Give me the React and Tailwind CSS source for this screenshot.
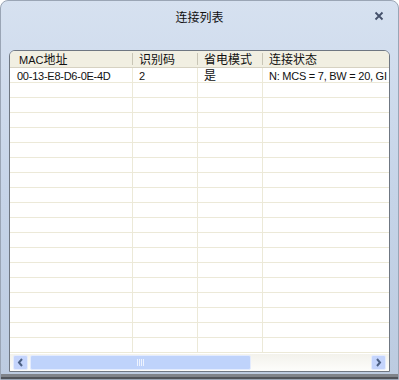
import React from "react";

const cols = [
  { w: "w-[123px]", label: (<><span className="text-[11px]">MAC</span><span className="text-[12px]">地址</span></>) },
  { w: "w-[65px]", label: "识别码" },
  { w: "w-[65px]", label: "省电模式" },
  { w: "flex-1", label: "连接状态" },
];

const data = [["00-13-E8-D6-0E-4D", "2", "是", "N: MCS = 7, BW = 20, GI = 800"]];

export default function App() {
  const rows = Array.from({ length: 19 }, (_, i) => data[i] || ["", "", "", ""]);
  return (
    <div className="w-[399px] h-[380px] bg-[#ffffff] overflow-hidden" style={{ fontFamily: '"Liberation Sans", "Noto Sans CJK SC", sans-serif' }}>
      <div className="w-[399px] h-[380px] rounded-t-[8px] border border-[#9aa5b5] bg-gradient-to-b from-[#d6e1f0] via-[#c6d4e8] to-[#bccbe0] flex flex-col shadow-[inset_0_-2px_0_#50545a,inset_0_-5px_0_#80848a]">
        {/* title */}
        <div className="h-[32px] relative flex items-center justify-center text-[12px] text-[#111]">
          <span className="mt-[1px]">连接列表</span>
          <span className="absolute right-[14px] top-[10px]">
            <svg width="10" height="10" viewBox="0 0 10 10">
              <path d="M1.5 1.5 L8.5 8.5 M8.5 1.5 L1.5 8.5" stroke="#44506a" strokeWidth="1.8" />
            </svg>
          </span>
        </div>
        <div className="h-[17px]" />
        {/* list */}
        <div className="mx-[8px] flex-1 mb-[7px] rounded-t-[6px] border border-[#6f7782] bg-white flex flex-col overflow-hidden">
          <div className="h-[17px] flex bg-[#f1efe2] border-b border-[#d6d2c2] text-[12px] text-[#111]">
            {cols.map((c, i) => (
              <div key={i} className={`${c.w} flex items-center relative`}>
                <span className={i === 0 ? "pl-[9px] pt-[1px]" : "pl-[6px] pt-[1px]"}>{c.label}</span>
                {i < 3 && <span className="absolute right-0 top-[2px] bottom-[2px] w-px bg-[#c9c6b6]" />}
              </div>
            ))}
          </div>
          <div className="flex-1 overflow-hidden">
            {rows.map((r, ri) => (
              <div key={ri} className="h-[15px] flex border-b border-[#ece9d8] text-[11px] text-[#111] tracking-[-0.25px]">
                {cols.map((c, i) => (
                  <div key={i} className={`${c.w} flex items-center pt-[2px] overflow-hidden whitespace-nowrap ${i < 3 ? "border-r border-[#ece9d8]" : ""}`}>
                    <span className={`${i === 0 ? "pl-[7px]" : "pl-[6px]"} ${i === 2 ? "text-[12px]" : ""}`}>{r[i]}</span>
                  </div>
                ))}
              </div>
            ))}
          </div>
          {/* scrollbar */}
          <div className="h-[17px] flex items-center bg-gradient-to-b from-[#f3f2ec] to-[#fdfdfb] px-[3px] gap-[2px]">
            <div className="w-[15px] h-[15px] rounded-[2px] bg-[#c4d4fc] border border-[#e5ecfd] flex items-center justify-center">
              <svg width="7" height="9" viewBox="0 0 7 9"><path d="M5 1 L2 4.5 L5 8" stroke="#4d6185" strokeWidth="2" fill="none" /></svg>
            </div>
            <div className="w-[221px] h-[15px] rounded-[2px] bg-[#bfd3fb] border border-[#e3ebfd] flex items-center justify-center">
              <svg width="8" height="7" viewBox="0 0 8 7"><path d="M0.5 0 V7 M2.5 0 V7 M4.5 0 V7 M6.5 0 V7" stroke="#eef3fe" strokeWidth="1" /></svg>
            </div>
            <div className="flex-1" />
            <div className="w-[15px] h-[15px] rounded-[2px] bg-[#c4d4fc] border border-[#e5ecfd] flex items-center justify-center">
              <svg width="7" height="9" viewBox="0 0 7 9"><path d="M2 1 L5 4.5 L2 8" stroke="#4d6185" strokeWidth="2" fill="none" /></svg>
            </div>
          </div>
        </div>
      </div>
    </div>
  );
}
